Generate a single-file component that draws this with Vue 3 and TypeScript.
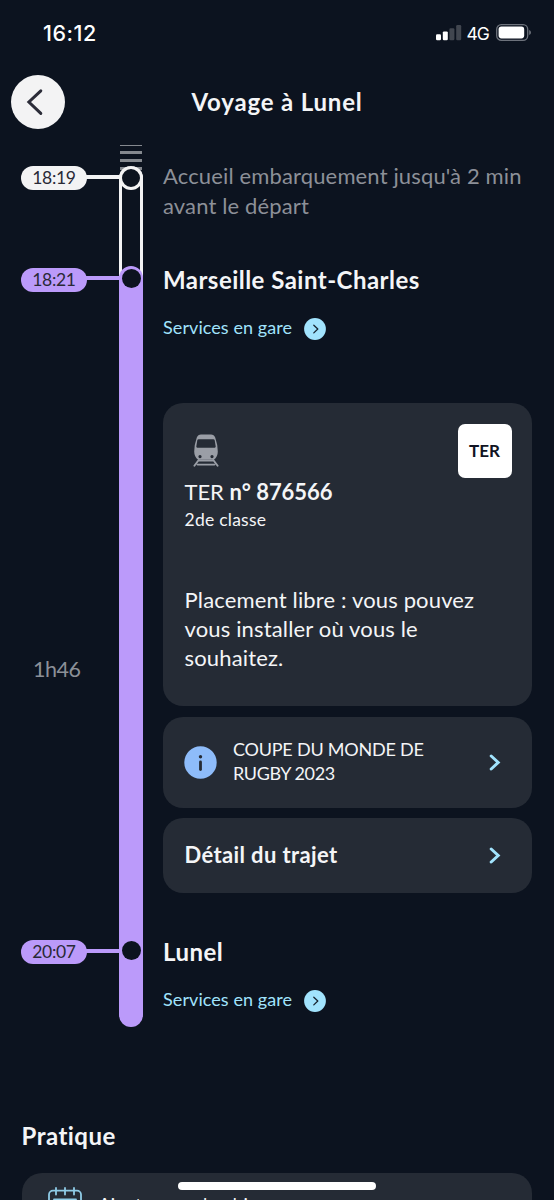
<script setup lang="ts">
interface Stop {
  id: string
  time: string
  name: string
}

const departure: Stop = { id: 'departure', time: '18:21', name: 'Marseille Saint-Charles' }
const arrival: Stop = { id: 'arrival', time: '20:07', name: 'Lunel' }
const trainNumber = '876566'
const duration = '1h46'
</script>

<template>
  <div class="screen">
    <div class="status">
      <span class="clock">16:12</span>
      <div class="indicators">
        <svg class="signal" width="26" height="16" viewBox="0 0 26 16">
          <rect x="0" y="9.2" width="5" height="6" rx="1.2" fill="#fff" />
          <rect x="6.8" y="6.4" width="5" height="8.8" rx="1.2" fill="#fff" />
          <rect x="13.4" y="3.2" width="5" height="12" rx="1.2" fill="#41464f" />
          <rect x="20.2" y="0" width="5" height="15.2" rx="1.2" fill="#41464f" />
        </svg>
        <span class="network">4G</span>
        <svg class="battery" width="36" height="18" viewBox="0 0 36 18">
          <rect x="0.7" y="0.7" width="31" height="15.6" rx="4.6" fill="none" stroke="#6d727b" stroke-width="1.3" />
          <rect x="2.6" y="2.6" width="25.6" height="11.8" rx="2.8" fill="#fff" />
          <path d="M33.2 6.1 Q35 6.8 35 8.5 T33.2 10.9 Z" fill="#6d727b" />
        </svg>
      </div>
    </div>

    <header class="header">
      <button class="back" aria-label="Retour">
        <svg width="54" height="54" viewBox="0 0 54 54">
          <path d="M29.8 15.8 L17.9 27 L29.8 38.4" fill="none" stroke="#2b2c38" stroke-width="3" stroke-linecap="round" stroke-linejoin="miter" />
        </svg>
      </button>
      <h1 class="title">Voyage à Lunel</h1>
    </header>

    <div class="hatch"><i class="thin"></i><i></i><i></i><i></i></div>

    <main class="trip">
      <section class="row boarding">
        <div class="when"><span class="pill white">18:19</span><span class="link white"></span></div>
        <div class="rail outline"><span class="dot ring"></span></div>
        <p class="notice">Accueil embarquement jusqu'à 2 min<br />avant le départ</p>
      </section>

      <section class="row journey">
        <div class="when">
          <span class="pill">{{ departure.time }}</span><span class="link"></span>
          <span class="duration">{{ duration }}</span>
        </div>
        <div class="rail full top"><span class="dot"></span></div>
        <div class="content">
          <h2 class="stop">{{ departure.name }}</h2>
          <a class="services">
            <span>Services en gare</span>
            <svg width="22" height="22" viewBox="0 0 22 22">
              <circle cx="11" cy="11" r="10.9" fill="#a1e3fd" />
              <path d="M9.8 7.2 L13.8 11 L9.8 14.9" fill="none" stroke="#17232f" stroke-width="1.3" stroke-linecap="round" stroke-linejoin="round" />
            </svg>
          </a>

          <article class="card train">
            <div class="train-head">
              <svg class="train-icon" width="26" height="33" viewBox="0 0 26 33">
                <path fill="#9a9ea6" fill-rule="evenodd" d="M8 0.5 H18 Q21 0.5 22.2 3.6 Q24.8 11 24.8 17.5 Q24.8 23 20.8 25.7 H5.2 Q1.2 23 1.2 17.5 Q1.2 11 3.8 3.6 Q5 0.5 8 0.5 Z M5.6 5.2 Q4.6 5.2 4.3 6.2 L3.3 12.6 Q3.2 13.7 4.2 13.7 H21.8 Q22.8 13.7 22.7 12.6 L21.7 6.2 Q21.4 5.2 20.4 5.2 Z M7 21 a1.6 1.6 0 1 0 0.01 0 Z M19 21 a1.6 1.6 0 1 0 0.01 0 Z" />
                <path d="M5.7 26 L1.4 31.8 M20.3 26 L24.6 31.8 M6 26.6 H20 M4.6 30.6 H21.4" fill="none" stroke="#9a9ea6" stroke-width="1.9" stroke-linecap="round" />
              </svg>
              <div class="brand">TER</div>
            </div>
            <div class="train-name">TER <b>n° {{ trainNumber }}</b></div>
            <div class="train-class">2de classe</div>
            <p class="seat">Placement libre : vous pouvez<br />vous installer où vous le<br />souhaitez.</p>
          </article>

          <article class="card info">
            <svg width="33" height="33" viewBox="0 0 33 33">
              <circle cx="16.5" cy="16.5" r="16.2" fill="#8ebcfa" />
              <circle cx="16.5" cy="10.8" r="1.7" fill="#252b35" />
              <path d="M16.5 16 V23.6" stroke="#252b35" stroke-width="2.8" stroke-linecap="round" />
            </svg>
            <p class="info-text">COUPE DU MONDE DE<br /><span class="second">RUGBY 2023</span></p>
            <svg class="chevron" width="12" height="17" viewBox="0 0 12 17">
              <path d="M2.2 2 L9.2 8.5 L2.2 15" fill="none" stroke="#a1e3fd" stroke-width="3" stroke-linecap="round" stroke-linejoin="miter" />
            </svg>
          </article>

          <article class="card detail">
            <span class="detail-label">Détail du trajet</span>
            <svg class="chevron" width="12" height="17" viewBox="0 0 12 17">
              <path d="M2.2 2 L9.2 8.5 L2.2 15" fill="none" stroke="#a1e3fd" stroke-width="3" stroke-linecap="round" stroke-linejoin="miter" />
            </svg>
          </article>
        </div>
      </section>

      <section class="row end">
        <div class="when"><span class="pill">{{ arrival.time }}</span><span class="link"></span></div>
        <div class="rail full bottom"><span class="dot"></span></div>
        <div class="content">
          <h2 class="stop">{{ arrival.name }}</h2>
          <a class="services">
            <span>Services en gare</span>
            <svg width="22" height="22" viewBox="0 0 22 22">
              <circle cx="11" cy="11" r="10.9" fill="#a1e3fd" />
              <path d="M9.8 7.2 L13.8 11 L9.8 14.9" fill="none" stroke="#17232f" stroke-width="1.3" stroke-linecap="round" stroke-linejoin="round" />
            </svg>
          </a>
        </div>
      </section>
    </main>

    <section class="practical">
      <h2 class="stop">Pratique</h2>
      <article class="card agenda">
        <svg width="34" height="34" viewBox="0 0 34 34">
          <g fill="none" stroke="#8fcbe6" stroke-width="1.8" stroke-linecap="round">
            <rect x="1" y="4.6" width="32" height="28" rx="4" />
            <path d="M8 2 V8.6 M17 2 V8.6 M26 2 V8.6 M6 13.4 H28" />
          </g>
        </svg>
        <span class="agenda-text">Ajouter au calendrier</span>
      </article>
    </section>

    <div class="home-indicator"></div>
  </div>
</template>

<style>
html, body { margin: 0; background: #0c131f; overflow: hidden; }
</style>

<style scoped>
.screen {
  position: relative;
  width: 554px;
  height: 1200px;
  overflow: hidden;
  background: #0c131f;
  color: #f4f5f7;
  font-family: Lato, "Noto Sans", sans-serif;
  font-variant-ligatures: none;
}
.screen * { box-sizing: border-box; }
h1, h2, p { margin: 0; white-space: nowrap; }
span { white-space: nowrap; }
.status {
  height: 66px;
  padding: 0 22px 0 43px;
  display: flex;
  align-items: center;
  justify-content: space-between;
}
.clock { font: 500 21.5px/24px Inter, sans-serif; letter-spacing: 0.5px; color: #fff; }
.indicators { display: flex; align-items: center; }
.network { font: 400 17.5px/20px Inter, sans-serif; letter-spacing: -0.9px; margin: 1px 7px 0 4px; color: #fff; }
.header {
  height: 72px;
  display: grid;
  grid-template-columns: 64px 1fr 64px;
  align-items: center;
}
.back {
  width: 54px;
  height: 54px;
  margin-left: 10.5px;
  border: 0;
  padding: 0;
  border-radius: 50%;
  background: #f3f3f4;
}
.back svg { display: block; }
.title { font-size: 24px; line-height: 30px; font-weight: 700; letter-spacing: 0.82px; text-align: center; }
.hatch { width: 22px; height: 28px; margin-left: 120px; padding-top: 6.5px; display: flex; flex-direction: column; gap: 5px; }
.hatch i { flex: none; height: 3px; background: #85898f; }
.hatch .thin { height: 1px; }
.trip { display: flex; flex-direction: column; }
.row { display: grid; grid-template-columns: 119px 24px 1fr; }
.boarding { height: 100px; }
.journey { height: 673px; }
.end { height: 88px; }
.when {
  display: grid;
  grid-template-columns: 66px 1fr;
  grid-template-rows: 24px 1fr;
  padding-left: 21px;
}
.journey .when { padding-top: 2px; }
.end .when { padding-top: 1px; }
.pill {
  height: 24px;
  border-radius: 12px;
  background: #bb9afa;
  color: #292936;
  font-size: 17.5px;
  letter-spacing: -0.3px;
  line-height: 23px;
  text-align: center;
}
.pill.white { background: #f3f3f4; }
.link { height: 4px; margin: 9px -2px 0 -1px; background: #bb9afa; }
.link.white { background: #f3f3f4; }
.journey .link { margin-top: 8px; }
.duration { color: #8c9098; font-size: 21.5px; line-height: 28px; padding: 363px 0 0 12px; letter-spacing: -0.5px; }
.rail { display: flex; justify-content: center; align-items: flex-start; }
.rail.full { background: #bb9afa; }
.rail.top { border-radius: 12px 12px 0 0; padding-top: 3px; }
.rail.bottom { border-radius: 0 0 12px 12px; padding-top: 2px; }
.rail.outline {
  height: 112px;
  border: solid #f3f3f4;
  border-width: 0 3px;
  border-radius: 12px 12px 0 0;
}
.dot { flex: none; width: 19px; height: 19px; border-radius: 50%; background: #0c131f; }
.dot.ring { width: 24px; height: 24px; border: 3px solid #f3f3f4; }
.notice { padding: 0 0 0 20px; margin-top: -5px; color: #8c9098; font-size: 22px; line-height: 29.5px; letter-spacing: 0.14px; }
.content { padding: 0 22px 0 20px; }
.stop { font-size: 24px; line-height: 30px; font-weight: 700; letter-spacing: 0.47px; }
.journey .stop { margin-top: -1px; }
.end .stop { margin-top: -2px; }
.services {
  height: 24px;
  margin-top: 20px;
  display: flex;
  align-items: center;
  gap: 11.5px;
  color: #a1e3fd;
  font-size: 18px;
  letter-spacing: 0.08px;
}
.services svg { margin-top: 3px; }
.card { border-radius: 20px; background: #252b35; }
.train { height: 303px; margin-top: 64px; padding: 21px 20.5px 0 21.5px; }
.train-head { display: flex; justify-content: space-between; align-items: flex-start; height: 54px; }
.train-icon { display: block; margin: 10px 0 0 8.5px; }
.brand {
  width: 54px;
  height: 54px;
  border-radius: 7px;
  background: #fff;
  color: #111423;
  font-size: 17px;
  line-height: 53px;
  font-weight: 700;
  text-align: center;
}
.train-name { font-size: 22px; line-height: 28px; letter-spacing: -0.05px; }
.train-class { margin-top: 1.5px; font-size: 17.5px; line-height: 24px; letter-spacing: 0.25px; }
.seat { margin-top: 53px; font-size: 22px; line-height: 29.4px; letter-spacing: 0.15px; }
.info { height: 91px; margin-top: 10.5px; padding: 0 31px 0 21px; display: flex; align-items: center; }
.info-text { flex: 1; margin: -2px 0 0 16px; font-size: 18px; line-height: 24px; letter-spacing: -0.22px; }
.second { letter-spacing: -0.4px; }
.detail {
  height: 75px;
  margin-top: 10.5px;
  padding: 0 31px 0 21.5px;
  display: flex;
  align-items: center;
  justify-content: space-between;
  font-size: 22px;
  font-weight: 700;
  letter-spacing: 0.37px;
}
.detail-label { margin-top: -2px; }
.practical { padding: 94px 22px 0 21.5px; }
.agenda { height: 80px; margin-top: 22px; padding: 13px 26px; display: flex; gap: 17px; font-size: 18px; line-height: 37px; }
.home-indicator {
  position: absolute;
  left: 178px;
  top: 1182px;
  width: 198px;
  height: 8px;
  border-radius: 4px;
  background: #fff;
}
</style>
